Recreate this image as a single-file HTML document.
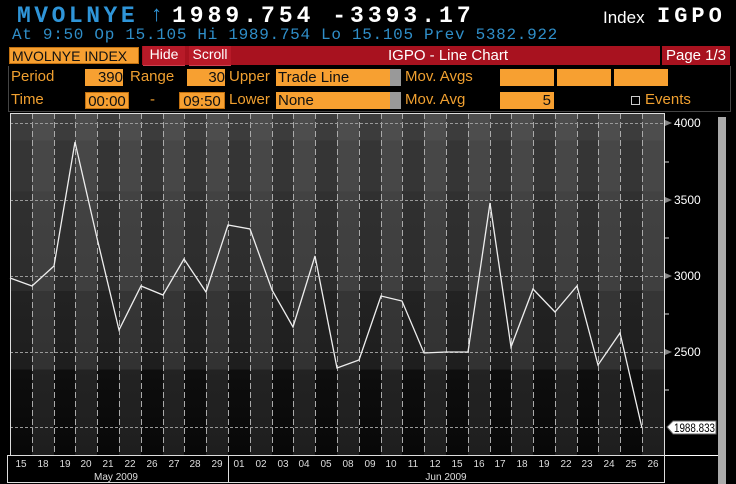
<!DOCTYPE html>
<html><head><style>
body{margin:0;background:#000;width:736px;height:484px;overflow:hidden;position:relative;font-family:"Liberation Sans",sans-serif}
.a{position:absolute;white-space:nowrap}
.mono{font-family:"Liberation Mono",monospace}
.or{background:#f7a031;color:#111}
.lab{color:#f0a030;font-size:15px}
</style></head><body>
<div class="a mono" style="left:17px;top:3px;font-size:23px;font-weight:bold;color:#2f95d8;letter-spacing:3.5px">MVOLNYE</div>
<div class="a mono" style="left:150px;top:3px;font-size:22px;color:#2f95d8">↑</div>
<div class="a mono" style="left:172px;top:3px;font-size:23px;font-weight:bold;color:#fff;letter-spacing:4px">1989.754 -3393.17</div>
<div class="a" style="left:603px;top:8px;font-size:17px;color:#fff">Index</div>
<div class="a mono" style="left:657px;top:4px;font-size:22px;font-weight:bold;color:#fff;letter-spacing:4px">IGPO</div>
<div class="a mono" style="left:12px;top:26px;font-size:16px;color:#2f8ec8;letter-spacing:0.7px">At  9:50 Op 15.105   Hi 1989.754   Lo 15.105   Prev 5382.922</div>

<div class="a or" style="left:9px;top:47px;width:130px;height:17px;font-size:14px;line-height:17px;padding-left:2px;box-sizing:border-box;border:1px solid #c07010">MVOLNYE INDEX</div>
<div class="a" style="left:142px;top:46px;width:518px;height:19px;background:#a8121f"></div>
<div class="a" style="left:143px;top:46px;width:42px;height:19px;background:#b81a28;color:#fff;font-size:14px;text-align:center;line-height:17px;border-bottom:1px solid #d04050">Hide</div>
<div class="a" style="left:189px;top:46px;width:42px;height:19px;background:#b81a28;color:#fff;font-size:14px;text-align:center;line-height:17px;border-bottom:1px solid #d04050">Scroll</div>
<div class="a" style="left:388px;top:47px;color:#fff;font-size:15px">IGPO - Line Chart</div>
<div class="a" style="left:662px;top:46px;width:68px;height:19px;background:#a8121f;color:#fff;font-size:15px;text-align:center;line-height:19px">Page 1/3</div>

<div class="a" style="left:8px;top:66px;width:721px;height:45px;border:1px solid #444;border-top:none"></div>
<div class="a lab" style="left:11px;top:68px">Period</div>
<div class="a or" style="left:85px;top:69px;width:38px;height:17px;font-size:15px;text-align:right;line-height:17px">390</div>
<div class="a lab" style="left:130px;top:68px">Range</div>
<div class="a or" style="left:187px;top:69px;width:38px;height:17px;font-size:15px;text-align:right;line-height:17px">30</div>
<div class="a lab" style="left:229px;top:68px">Upper</div>
<div class="a or" style="left:276px;top:69px;width:112px;height:17px;font-size:15px;line-height:17px;padding-left:2px">Trade Line</div>
<div class="a" style="left:390px;top:69px;width:11px;height:17px;background:#999"></div>
<div class="a lab" style="left:405px;top:68px">Mov. Avgs</div>
<div class="a or" style="left:500px;top:69px;width:54px;height:17px"></div>
<div class="a or" style="left:557px;top:69px;width:54px;height:17px"></div>
<div class="a or" style="left:614px;top:69px;width:54px;height:17px"></div>

<div class="a lab" style="left:11px;top:91px">Time</div>
<div class="a or" style="left:85px;top:92px;width:44px;height:17px;font-size:15px;line-height:17px;text-align:center;border:1px solid #c07010;box-sizing:border-box">00:00</div>
<div class="a lab" style="left:150px;top:91px">-</div>
<div class="a or" style="left:179px;top:92px;width:46px;height:17px;font-size:15px;line-height:17px;text-align:center;border:1px solid #c07010;box-sizing:border-box">09:50</div>
<div class="a lab" style="left:229px;top:91px">Lower</div>
<div class="a or" style="left:276px;top:92px;width:112px;height:17px;font-size:15px;line-height:17px;padding-left:2px">None</div>
<div class="a" style="left:390px;top:92px;width:11px;height:17px;background:#999"></div>
<div class="a lab" style="left:405px;top:91px">Mov. Avg</div>
<div class="a or" style="left:500px;top:92px;width:54px;height:17px;font-size:15px;text-align:right;line-height:17px;padding-right:3px;box-sizing:border-box">5</div>
<div class="a" style="left:631px;top:96px;width:9px;height:9px;border:1px solid #ccc;box-sizing:border-box"></div>
<div class="a" style="left:645px;top:91px;color:#f0a030;font-size:15px">Events</div>

<svg class="a" style="left:0;top:0" width="736" height="484">
<defs>
<linearGradient id="g" x1="0" y1="0" x2="0" y2="1">
<stop offset="0" stop-color="#3c3c3c"/><stop offset="0.08" stop-color="#3c3c3c"/>
<stop offset="0.08" stop-color="#353535"/><stop offset="0.23" stop-color="#353535"/>
<stop offset="0.23" stop-color="#303030"/><stop offset="0.52" stop-color="#2c2c2c"/>
<stop offset="0.52" stop-color="#222"/><stop offset="0.75" stop-color="#1e1e1e"/>
<stop offset="0.75" stop-color="#0e0e0e"/><stop offset="1" stop-color="#080808"/>
</linearGradient>
</defs>
<rect x="10" y="113" width="655" height="342" fill="url(#g)"/>
<g fill="#fff" fill-opacity="0.09">
<rect x="32" y="113" width="22" height="342"/><rect x="75" y="113" width="22" height="342"/><rect x="119" y="113" width="22" height="342"/><rect x="163" y="113" width="21" height="342"/><rect x="206" y="113" width="22" height="342"/><rect x="250" y="113" width="22" height="342"/><rect x="293" y="113" width="22" height="342"/><rect x="337" y="113" width="22" height="342"/><rect x="381" y="113" width="21" height="342"/><rect x="424" y="113" width="22" height="342"/><rect x="468" y="113" width="22" height="342"/><rect x="511" y="113" width="22" height="342"/><rect x="555" y="113" width="22" height="342"/><rect x="598" y="113" width="22" height="342"/><rect x="642" y="113" width="23" height="342"/>
</g>
<g stroke="#aaa" stroke-width="1" stroke-dasharray="6,3">
<line x1="32.5" y1="113" x2="32.5" y2="455"/><line x1="54.5" y1="113" x2="54.5" y2="455"/><line x1="75.5" y1="113" x2="75.5" y2="455"/><line x1="97.5" y1="113" x2="97.5" y2="455"/><line x1="119.5" y1="113" x2="119.5" y2="455"/><line x1="141.5" y1="113" x2="141.5" y2="455"/><line x1="163.5" y1="113" x2="163.5" y2="455"/><line x1="184.5" y1="113" x2="184.5" y2="455"/><line x1="206.5" y1="113" x2="206.5" y2="455"/><line x1="228.5" y1="113" x2="228.5" y2="455"/><line x1="250.5" y1="113" x2="250.5" y2="455"/><line x1="272.5" y1="113" x2="272.5" y2="455"/><line x1="293.5" y1="113" x2="293.5" y2="455"/><line x1="315.5" y1="113" x2="315.5" y2="455"/><line x1="337.5" y1="113" x2="337.5" y2="455"/><line x1="359.5" y1="113" x2="359.5" y2="455"/><line x1="381.5" y1="113" x2="381.5" y2="455"/><line x1="402.5" y1="113" x2="402.5" y2="455"/><line x1="424.5" y1="113" x2="424.5" y2="455"/><line x1="446.5" y1="113" x2="446.5" y2="455"/><line x1="468.5" y1="113" x2="468.5" y2="455"/><line x1="490.5" y1="113" x2="490.5" y2="455"/><line x1="511.5" y1="113" x2="511.5" y2="455"/><line x1="533.5" y1="113" x2="533.5" y2="455"/><line x1="555.5" y1="113" x2="555.5" y2="455"/><line x1="577.5" y1="113" x2="577.5" y2="455"/><line x1="598.5" y1="113" x2="598.5" y2="455"/><line x1="620.5" y1="113" x2="620.5" y2="455"/><line x1="642.5" y1="113" x2="642.5" y2="455"/>
</g>
<g stroke="#999" stroke-width="1" stroke-dasharray="3,2">
<line x1="10" y1="123.5" x2="665" y2="123.5"/><line x1="10" y1="200.5" x2="665" y2="200.5"/><line x1="10" y1="276.5" x2="665" y2="276.5"/><line x1="10" y1="352.5" x2="665" y2="352.5"/><line x1="10" y1="427.5" x2="665" y2="427.5"/>
</g>
<polyline fill="none" stroke="#eee" stroke-width="1.3" points="10,278 32,286 54,266 75,142 97,238 119,330 141,286 163,295 184,259 206,292 228,225 250,229 272,290 293,327 315,256 337,368 359,360 381,296 402,301 424,353 446,352 468,352 490,203 511,347 533,289 555,312 577,286 598,365 620,333 642,428"/>
<rect x="10.5" y="113.5" width="654" height="342" fill="none" stroke="#ddd"/>
<line x1="665" y1="455.5" x2="722" y2="455.5" stroke="#fff"/>
<rect x="718" y="117" width="8" height="367" fill="#aaa"/>
<g fill="#888"><polygon points="665,120 672,123 665,126"/><polygon points="665,197 672,200 665,203"/><polygon points="665,273 672,276 665,279"/><polygon points="665,349 672,352 665,355"/></g>
<g stroke="#ddd"><line x1="665" y1="162" x2="669" y2="162"/><line x1="665" y1="238" x2="669" y2="238"/><line x1="665" y1="314" x2="669" y2="314"/><line x1="665" y1="390" x2="669" y2="390"/></g>
<g fill="#fff" font-family="Liberation Sans,sans-serif" font-size="12">
<text x="674" y="127">4000</text><text x="674" y="204">3500</text><text x="674" y="280">3000</text><text x="674" y="356">2500</text>
</g>
<polygon points="667,427 673,421 716,421 716,434 673,434" fill="#fff" stroke="#666"/>
<text x="674" y="432" font-family="Liberation Sans,sans-serif" font-size="11.5" fill="#000" textLength="41" lengthAdjust="spacingAndGlyphs">1988.833</text>
<rect x="7.5" y="455.5" width="657" height="27" fill="#000" stroke="#ddd"/>
<line x1="228.5" y1="456" x2="228.5" y2="483" stroke="#ddd"/>
<g fill="#ddd" font-family="Liberation Sans,sans-serif" font-size="10" text-anchor="middle">
<text x="21" y="467">15</text><text x="43" y="467">18</text><text x="65" y="467">19</text><text x="86" y="467">20</text><text x="108" y="467">21</text><text x="130" y="467">22</text><text x="152" y="467">26</text><text x="174" y="467">27</text><text x="195" y="467">28</text><text x="217" y="467">29</text>
<text x="239" y="467">01</text><text x="261" y="467">02</text><text x="283" y="467">03</text><text x="304" y="467">04</text><text x="326" y="467">05</text><text x="348" y="467">08</text><text x="370" y="467">09</text><text x="391" y="467">10</text><text x="413" y="467">11</text><text x="435" y="467">12</text><text x="457" y="467">15</text><text x="479" y="467">16</text><text x="500" y="467">17</text><text x="522" y="467">18</text><text x="544" y="467">19</text><text x="566" y="467">22</text><text x="587" y="467">23</text><text x="609" y="467">24</text><text x="631" y="467">25</text><text x="653" y="467">26</text>
<text x="116" y="480">May 2009</text><text x="446" y="480">Jun 2009</text>
</g>
</svg>
</body></html>
